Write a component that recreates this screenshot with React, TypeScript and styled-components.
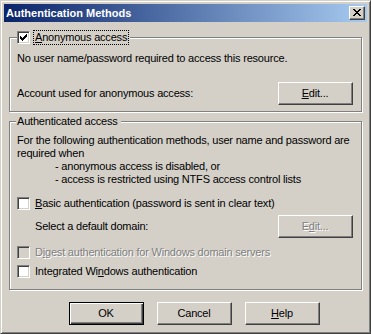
import React from "react";
import styled, { createGlobalStyle } from "styled-components";

const GlobalStyle = createGlobalStyle`
  html, body {
    margin: 0;
    padding: 0;
    background: #d4d0c8;
  }
  body {
    font-family: "Liberation Sans", Arial, sans-serif;
    font-size: 11px;
    letter-spacing: -0.2px;
    color: #000;
  }
`;

const Window = styled.div`
  box-sizing: border-box;
  width: 371px;
  height: 334px;
  background: #d4d0c8;
  border: 1px solid;
  border-color: #d4d0c8 #404040 #404040 #d4d0c8;
  box-shadow: inset 1px 1px #fff, inset -1px -1px #808080;
  padding: 3px;
  display: flex;
  flex-direction: column;
`;

const TitleBar = styled.div`
  height: 18px;
  flex: none;
  display: flex;
  align-items: center;
  justify-content: space-between;
  padding: 0 2px 0 2px;
  background: linear-gradient(to right, #0a246a, #a6caf0);
`;

const TitleText = styled.span`
  color: #fff;
  font-weight: bold;
  font-size: 11px;
  letter-spacing: 0;
  line-height: 13px;
  white-space: nowrap;
`;

const CaptionButton = styled.div`
  box-sizing: border-box;
  width: 16px;
  height: 14px;
  background: #d4d0c8;
  border: 1px solid;
  border-color: #fff #404040 #404040 #fff;
  box-shadow: inset -1px -1px #808080;
  display: flex;
  align-items: center;
  justify-content: center;
  padding: 0 1px 1px 0;
`;

const Body = styled.div`
  flex: 1;
  display: flex;
  flex-direction: column;
  padding: 15px 4px 0 5px;
`;

const Group = styled.div<{ $h: number; $pt: number }>`
  position: relative;
  box-sizing: border-box;
  height: ${(p) => p.$h}px;
  border: 1px solid #808080;
  box-shadow: inset 1px 1px #fff, 1px 1px #fff;
  padding: ${(p) => p.$pt}px 8px 0 7px;
  margin-right: 1px;
  display: flex;
  flex-direction: column;
`;

const Legend = styled.div<{ $left: number }>`
  position: absolute;
  top: -8px;
  left: ${(p) => p.$left}px;
  height: 14px;
  display: flex;
  align-items: center;
  background: #d4d0c8;
  padding: 0 2px 0 0;
  line-height: 13px;
  white-space: nowrap;
`;

const LegendText = styled.span`
  padding: 0 1px;
`;

const Text = styled.div<{ $indent?: number }>`
  line-height: 13px;
  white-space: nowrap;
  padding-left: ${(p) => p.$indent ?? 0}px;
`;

const Row = styled.div<{ $mt: number; $indent?: number }>`
  display: flex;
  align-items: center;
  justify-content: space-between;
  margin-top: ${(p) => p.$mt}px;
  padding-left: ${(p) => p.$indent ?? 0}px;
  white-space: nowrap;
  line-height: 13px;
`;

const CheckRow = styled.label<{ $mt: number; $disabled?: boolean }>`
  display: flex;
  align-items: center;
  gap: 5px;
  height: 13px;
  margin-top: ${(p) => p.$mt}px;
  line-height: 13px;
  white-space: nowrap;
  color: ${(p) => (p.$disabled ? "#808080" : "#000")};
  text-shadow: ${(p) => (p.$disabled ? "1px 1px #fff" : "none")};
`;

const Box = styled.span<{ $disabled?: boolean }>`
  box-sizing: border-box;
  flex: none;
  width: 13px;
  height: 13px;
  border: 1px solid;
  border-color: #808080 #fff #fff #808080;
  box-shadow: inset 1px 1px #404040, inset -1px -1px #d4d0c8;
  background: ${(p) => (p.$disabled ? "#d4d0c8" : "#fff")};
  display: flex;
  align-items: center;
  justify-content: center;
`;

const LegendGap = styled.span`
  width: 5px;
`;

const FocusLabel = styled.span`
  outline: 1px dotted #000;
  outline-offset: 0;
  padding: 0 1px;
  margin-left: -1px;
  line-height: 13px;
`;

const Button = styled.div<{ $disabled?: boolean }>`
  box-sizing: border-box;
  flex: none;
  width: 75px;
  height: 23px;
  display: flex;
  align-items: center;
  justify-content: center;
  background: #d4d0c8;
  border: 1px solid;
  border-color: #fff #404040 #404040 #fff;
  box-shadow: inset -1px -1px #808080;
  padding: 0 1px 1px 0;
  color: ${(p) => (p.$disabled ? "#808080" : "#000")};
  text-shadow: ${(p) => (p.$disabled ? "1px 1px #fff" : "none")};
`;

const DefaultButton = styled(Button)`
  border-color: #000;
  box-shadow: inset 1px 1px #fff, inset -1px -1px #404040, inset -2px -2px #808080;
`;

const ButtonBar = styled.div`
  display: flex;
  gap: 13px;
  margin-top: 12px;
  padding-left: 60px;
`;

const U = styled.span`
  text-decoration: underline;
  text-underline-offset: 1px;
`;

const CheckMark = () => (
  <svg width="7" height="7" viewBox="0 0 7 7" shapeRendering="crispEdges">
    <path
      fill="#000"
      d="M0 2h1v3h-1zM1 3h1v3h-1zM2 4h1v3h-1zM3 3h1v3h-1zM4 2h1v3h-1zM5 1h1v3h-1zM6 0h1v3h-1z"
    />
  </svg>
);

const CloseGlyph = () => (
  <svg width="8" height="7" viewBox="0 0 8 7" shapeRendering="crispEdges">
    <path
      fill="#000"
      d="M0 0h2v1h-2zM6 0h2v1h-2zM1 1h2v1h-2zM5 1h2v1h-2zM2 2h4v1h-4zM3 3h2v1h-2zM2 4h4v1h-4zM1 5h2v1h-2zM5 5h2v1h-2zM0 6h2v1h-2zM6 6h2v1h-2z"
    />
  </svg>
);

const App: React.FC = () => {
  return (
    <>
      <GlobalStyle />
      <Window>
        <TitleBar>
          <TitleText>Authentication Methods</TitleText>
          <CaptionButton>
            <CloseGlyph />
          </CaptionButton>
        </TitleBar>
        <Body>
          <Group $h={75} $pt={14}>
            <Legend $left={7}>
              <Box>
                <CheckMark />
              </Box>
              <LegendGap />
              <FocusLabel>
                <U>A</U>nonymous access
              </FocusLabel>
            </Legend>
            <Text>No user name/password required to access this resource.</Text>
            <Row $mt={17}>
              <span>Account used for anonymous access:</span>
              <Button>
                <span>
                  <U>E</U>dit...
                </span>
              </Button>
            </Row>
          </Group>

          <Group $h={169} $pt={12} style={{ marginTop: 9 }}>
            <Legend $left={6}>
              <LegendText>Authenticated access</LegendText>
            </Legend>
            <Text>For the following authentication methods, user name and password are</Text>
            <Text>required when</Text>
            <Text $indent={38}>- anonymous access is disabled, or</Text>
            <Text $indent={38}>- access is restricted using NTFS access control lists</Text>
            <CheckRow $mt={11}>
              <Box />
              <span>
                <U>B</U>asic authentication (password is sent in clear text)
              </span>
            </CheckRow>
            <Row $mt={5} $indent={18}>
              <span>Select a default domain:</span>
              <Button $disabled>
                <span>
                  E<U>d</U>it...
                </span>
              </Button>
            </Row>
            <CheckRow $mt={8} $disabled>
              <Box $disabled />
              <span>
                D<U>i</U>gest authentication for Windows domain servers
              </span>
            </CheckRow>
            <CheckRow $mt={6}>
              <Box />
              <span>
                Integrated Wi<U>n</U>dows authentication
              </span>
            </CheckRow>
          </Group>

          <ButtonBar>
            <DefaultButton>OK</DefaultButton>
            <Button>Cancel</Button>
            <Button>
              <span>
                <U>H</U>elp
              </span>
            </Button>
          </ButtonBar>
        </Body>
      </Window>
    </>
  );
};

export default App;
